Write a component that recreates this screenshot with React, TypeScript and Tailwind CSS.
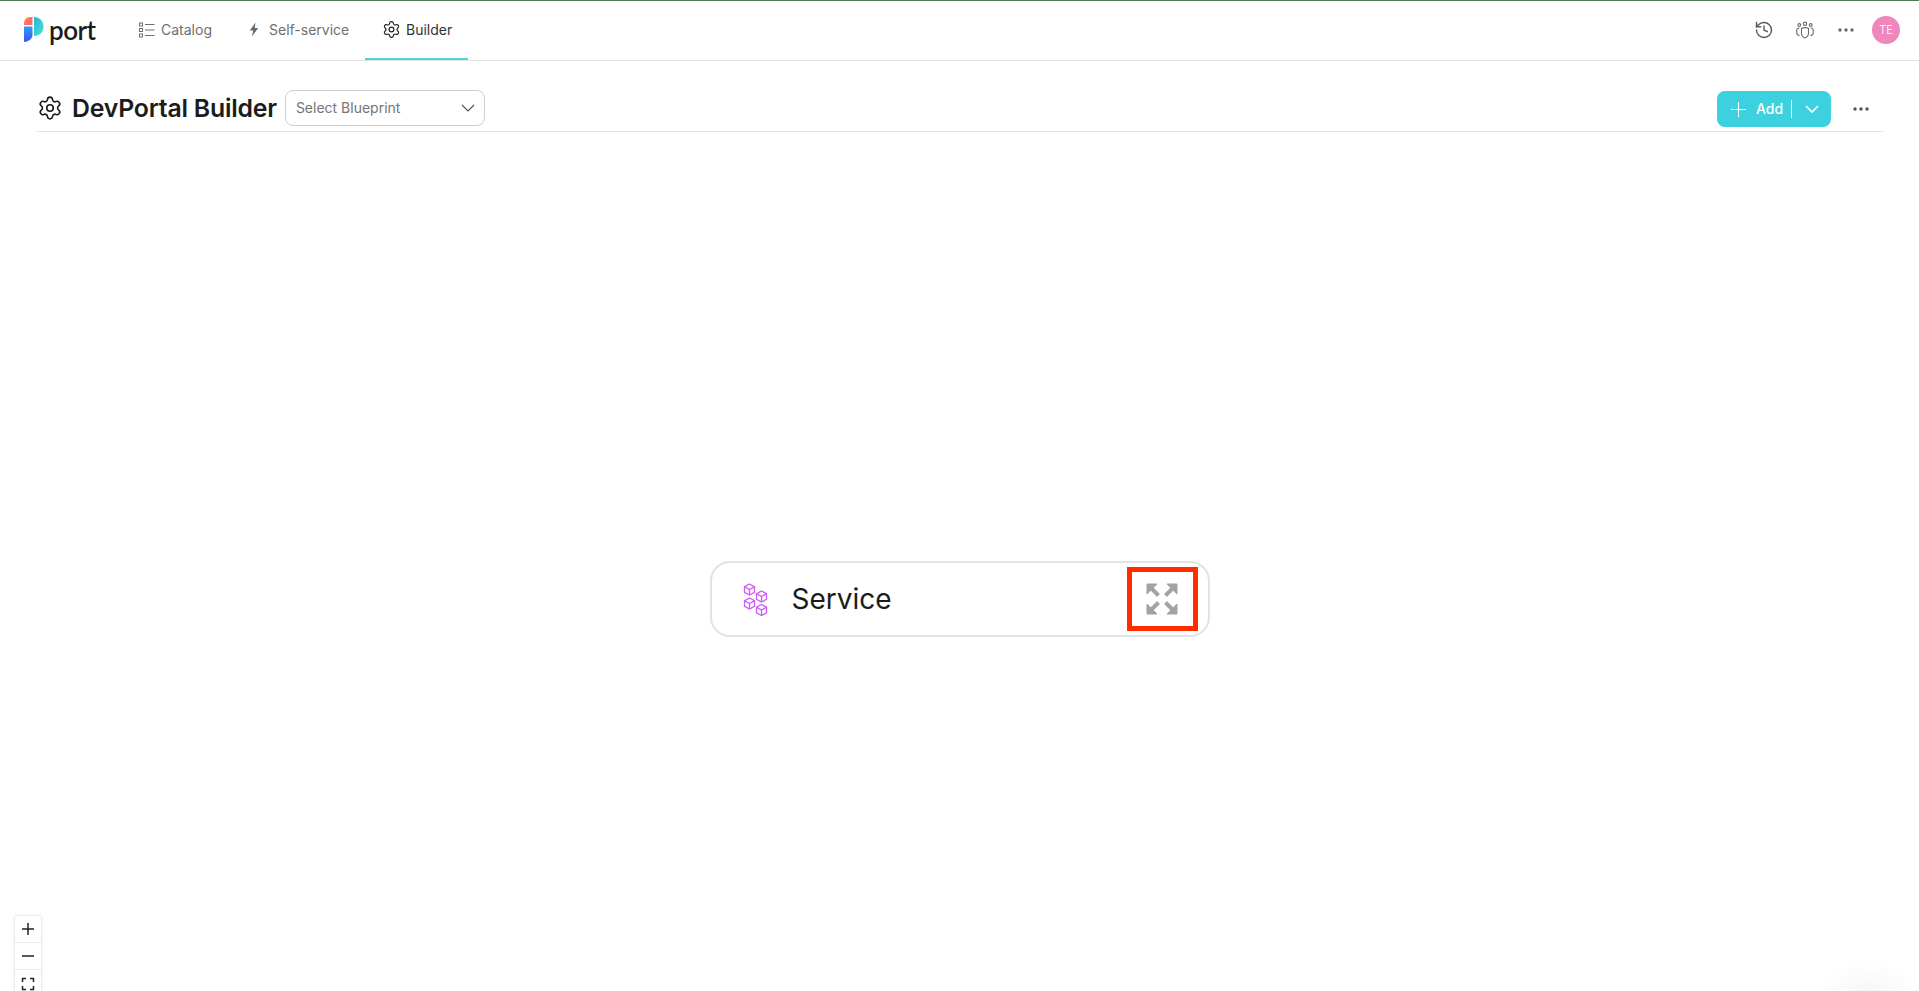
import { History, Settings } from "lucide-react";

function PortLogo() {
  return (
    <svg width="20" height="25" viewBox="0 0 20 25" fill="none">
      <defs>
        <linearGradient id="logoTop" x1="0" y1="0" x2="1" y2="1">
          <stop offset="0" stopColor="#ff8a3d" />
          <stop offset="1" stopColor="#ff5f7e" />
        </linearGradient>
        <linearGradient id="logoStem" x1="0.5" y1="0" x2="0.5" y2="1">
          <stop offset="0" stopColor="#2a9df4" />
          <stop offset="1" stopColor="#4152f5" />
        </linearGradient>
        <linearGradient id="logoBowl" x1="0" y1="0" x2="1" y2="1">
          <stop offset="0" stopColor="#22b8cf" />
          <stop offset="1" stopColor="#4fe0d8" />
        </linearGradient>
      </defs>
      <path d="M0 8V6a6 6 0 0 1 6-6h2.500v8H0z" fill="url(#logoTop)" />
      <path d="M0 9.500h8.500V18c0 3.500-3.500 6.500-8.500 7V9.500z" fill="url(#logoStem)" />
      <path d="M10 0c5.500 0 9.500 4.300 9.500 9.700S15.500 19 10 19V0z" fill="url(#logoBowl)" />
    </svg>
  );
}

function CatalogIcon() {
  return (
    <svg width="16" height="16" viewBox="0 0 16 16" fill="none" stroke="#6f6f6f" strokeWidth="1">
      <rect x="0.500" y="1" width="3" height="3" />
      <rect x="0.500" y="6.500" width="3" height="3" />
      <rect x="0.500" y="12" width="3" height="3" />
      <path d="M6 2.500h9.500M6 8h9.500M6 13.500h9.500" />
    </svg>
  );
}

function BoltIcon() {
  return (
    <svg width="10" height="15" viewBox="0 0 10 14" fill="#6a6a6a">
      <path d="M6.500 0 0.800 8h3.400L3 14l6.200-8.600H5.700L6.500 0z" />
    </svg>
  );
}

function TeamIcon() {
  return (
    <svg width="18" height="18" viewBox="0 0 18 18" fill="none" stroke="#6a6a6a" strokeWidth="1.100">
      <circle cx="9" cy="2.800" r="1.700" />
      <circle cx="3.300" cy="4" r="1.400" />
      <circle cx="14.700" cy="4" r="1.400" />
      <path d="M5.500 7.300c2.300-.9 4.700-.9 7 0v5c0 2.300-1.500 3.800-3.500 4.700-2-.9-3.500-2.400-3.500-4.700v-5z" />
      <path d="M3.300 7C1.900 7 .8 7.800.8 9v3c0 1.300.9 2.300 2.700 2.700" />
      <path d="M14.700 7c1.400 0 2.500.8 2.500 2v3c0 1.300-.9 2.300-2.700 2.700" />
    </svg>
  );
}

function Dots({ color }: { color: string }) {
  return (
    <svg width="18" height="4" viewBox="0 0 18 4" fill={color}>
      <circle cx="3" cy="2" r="1.700" />
      <circle cx="9" cy="2" r="1.700" />
      <circle cx="15" cy="2" r="1.700" />
    </svg>
  );
}

function Chevron({ color, width }: { color: string; width: number }) {
  return (
    <svg width="14" height="8" viewBox="0 0 14 8" fill="none" stroke={color} strokeWidth={width}>
      <path d="M1 1l6 6 6-6" />
    </svg>
  );
}

function Cube({ x, y }: { x: number; y: number }) {
  return (
    <g transform={`translate(${x} ${y})`}>
      <path d="M5.500 0.500 10.500 3.200v5.600L5.500 11.500.5 8.800V3.200L5.500.5z" />
      <path d="M.8 3.400 5.500 6l4.700-2.600M5.500 6v5.300" />
    </g>
  );
}

function ServiceIcon() {
  return (
    <svg width="26" height="33" viewBox="0 0 26 33" fill="none" stroke="#cb5cf6" strokeWidth="1.300">
      <Cube x={1} y={0.500} />
      <Cube x={13} y={7.500} />
      <Cube x={1} y={14.500} />
      <Cube x={13} y={21} />
    </svg>
  );
}

function ExpandIcon() {
  return (
    <svg width="32" height="32" viewBox="0 0 32 32" fill="#a3a3a3" stroke="#a3a3a3">
      <path d="M4 4 12.500 12.500M28 4 19.500 12.500M4 28 12.500 19.500M28 28 19.500 19.500" fill="none" strokeWidth="4" />
      <path d="M1 1h10L1 11V1zM31 1H21l10 10V1zM1 31h10L1 21v10zM31 31H21l10-10v10z" strokeWidth="1" />
    </svg>
  );
}

const tabs = [
  { label: "Catalog", icon: <CatalogIcon />, className: "w-[110px] pl-[17px] gap-[6px]" },
  { label: "Self-service", icon: <BoltIcon />, className: "w-[133px] pl-[17px] gap-[10px]" },
];

export default function App() {
  return (
    <div className="relative h-screen overflow-hidden bg-white font-['Inter',sans-serif]">
      {/* Top navigation */}
      <div className="flex h-[61px] items-stretch justify-between border-t border-b border-t-[#4d7f52] border-b-[#e4e4e4]">
        <div className="flex items-stretch">
          <div className="flex w-[122px] items-center gap-[5px] pl-6 pb-[2px]">
            <PortLogo />
            <span className="text-[26px] leading-none font-semibold tracking-[-0.5px] text-[#1d1d1d] font-['Lato',sans-serif]">
              port
            </span>
          </div>
          {tabs.map((tab) => (
            <div key={tab.label} className={`flex items-center pb-[2px] text-sm text-[#6f6f6f] ${tab.className}`}>
              {tab.icon}
              <span>{tab.label}</span>
            </div>
          ))}
          <div className="flex w-[103px] items-center gap-[5px] border-b-2 border-[#4fd3de] pl-[17px] text-sm text-[#333333]">
            <Settings size={19} strokeWidth={1.500} color="#222222" />
            <span>Builder</span>
          </div>
        </div>
        <div className="flex items-center pr-[19px] pb-[1px]">
          <History size={20} strokeWidth={1.700} color="#5a5a5a" />
          <div className="ml-[22px]">
            <TeamIcon />
          </div>
          <div className="ml-[23px]">
            <Dots color="#6a6a6a" />
          </div>
          <div className="ml-[17px] flex h-7 w-7 items-center justify-center rounded-full bg-[#ef87bd] text-[11px] font-light text-white">
            TE
          </div>
        </div>
      </div>

      {/* Page header */}
      <div className="mx-9 flex h-[71px] items-end justify-between border-b border-[#e4e4e4] pb-[4px]">
        <div className="flex items-center">
          <Settings size={26} strokeWidth={1.500} color="#1c1c1c" className="ml-[1px]" />
          <h1 className="ml-[9px] text-[24.8px] font-semibold tracking-[-0.2px] text-[#1c1c1c]">DevPortal Builder</h1>
          <div className="ml-[8px] flex h-[36px] w-[200px] items-center justify-between rounded-lg border border-[#cfcfcf] pr-[9px] pl-[10px] text-sm text-[#757575]">
            <span>Select Blueprint</span>
            <Chevron color="#555555" width={1.200} />
          </div>
        </div>
        <div className="flex items-center">
          <div className="flex h-[36px] w-[114px] items-center rounded-lg bg-[#3dd1e0] pl-[14px] text-sm font-medium text-white">
            <svg width="15" height="15" viewBox="0 0 15 15" stroke="#ffffff" strokeWidth="1.100">
              <path d="M7.500 0v15M0 7.500h15" />
            </svg>
            <span className="ml-[10px]">Add</span>
            <span className="ml-[8px] h-[18px] w-[1px] bg-white" />
            <div className="ml-[13px] flex">
              <Chevron color="#ffffff" width={1.600} />
            </div>
          </div>
          <div className="mr-[13px] ml-[21px]">
            <Dots color="#555555" />
          </div>
        </div>
      </div>

      {/* Canvas */}
      <div className="flex justify-center pt-[429px]">
        <div className="flex h-[76px] w-[500px] items-center rounded-[20px] border-2 border-[#e3e3e3] bg-white pl-[31px]">
          <ServiceIcon />
          <span className="ml-[23px] text-[28px] text-[#1c1c1c]">Service</span>
          <div className="mr-[10px] ml-auto flex h-[64px] w-[71px] items-center justify-center border-[5px] border-[#ff2d00]">
            <ExpandIcon />
          </div>
        </div>
      </div>

      {/* Zoom controls */}
      <div className="absolute top-[916px] left-[15px] flex w-[26px] flex-col bg-white shadow-[0_0_3px_rgba(0,0,0,0.2)]">
        <div className="flex h-[27px] items-center justify-center border-b border-[#eeeeee]">
          <svg width="14" height="14" viewBox="0 0 14 14" stroke="#222222" strokeWidth="1.500">
            <path d="M7 1v12M1 7h12" />
          </svg>
        </div>
        <div className="flex h-[27px] items-center justify-center border-b border-[#eeeeee]">
          <svg width="14" height="14" viewBox="0 0 14 14" stroke="#222222" strokeWidth="1.500">
            <path d="M1 7h12" />
          </svg>
        </div>
        <div className="flex h-[27px] items-center justify-center">
          <svg width="14" height="14" viewBox="0 0 14 14" fill="none" stroke="#222222" strokeWidth="1.500">
            <path d="M1.500 5V1.500H5M9 1.500h3.500V5M12.500 9v3.500H9M5 12.500H1.500V9" />
          </svg>
        </div>
      </div>

      <div className="pointer-events-none absolute right-0 bottom-[-30px] h-[60px] w-[100px] bg-[radial-gradient(closest-side,#f7f7f7,#ffffff)]" />
    </div>
  );
}
